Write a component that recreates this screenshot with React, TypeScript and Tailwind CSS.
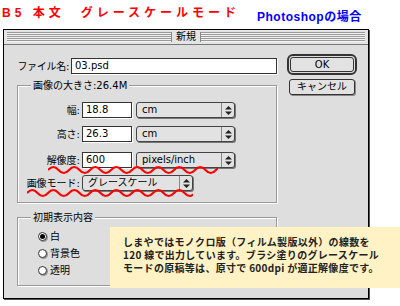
import React from 'react';

const font = "font-['DejaVu_Sans','Noto_Sans_CJK_JP',sans-serif]";

const Wave = ({ width, left, top }: { width: number; left: number; top: number }) => {
  const seg = 10.5;
  const n = Math.ceil(width / seg);
  let d = `M0 4 q${seg / 2} -6 ${seg} 0`;
  for (let i = 1; i < n; i++) d += ` t${seg} 0`;
  return (
    <svg
      width={width}
      height={8}
      className="absolute"
      style={{ left, top }}
    >
      <path d={d} fill="none" stroke="#ff0000" strokeWidth={2} />
    </svg>
  );
};

const Field = ({ value, className }: { value: string; className: string }) => (
  <div
    className={`h-[16px] bg-white border border-[#333] shadow-[1px_1px_0_#fff] pl-[3px] text-[10px] leading-[14px] text-black ${className}`}
  >
    {value}
  </div>
);

const Popup = ({ value, className }: { value: string; className: string }) => (
  <div
    className={`h-[16px] flex items-stretch border border-[#444] rounded-[3px] bg-[#e2e2e2] shadow-[1px_1px_0_#777] text-[10px] ${className}`}
  >
    <span className="flex-1 pl-[5px] leading-[14px]">{value}</span>
    <span className="w-[13px] border-l border-[#888] flex items-center justify-center">
      <svg width="7" height="9" viewBox="0 0 7 9">
        <path d="M3.5 0 L7 3.5 L0 3.5 Z M0 5.5 L7 5.5 L3.5 9 Z" fill="#222" />
      </svg>
    </span>
  </div>
);

const Radio = ({ label, checked }: { label: string; checked?: boolean }) => (
  <div className="flex items-center h-[17px]">
    <span className="w-[9px] h-[9px] rounded-full border border-[#333] bg-white shadow-[1px_1px_0_#999] flex items-center justify-center">
      {checked && <span className="w-[5px] h-[5px] rounded-full bg-black" />}
    </span>
    <span className="ml-[3px] text-[10px]">{label}</span>
  </div>
);

const Group = ({
  title,
  className,
  children,
}: {
  title: string;
  className: string;
  children: React.ReactNode;
}) => (
  <div
    className={`relative border border-[#999] shadow-[inset_1px_1px_0_#fff,1px_1px_0_#fff] ${className}`}
  >
    <span className="absolute -top-[7px] left-[13px] px-[2px] bg-[#dedede] text-[10px] leading-[13px] whitespace-nowrap">
      {title}
    </span>
    {children}
  </div>
);

const Label = ({ text }: { text: string }) => (
  <span className="w-[64px] pr-[2px] flex justify-end whitespace-nowrap text-[10px]">{text}</span>
);

const App: React.FC = () => {
  return (
    <div className={`relative w-[400px] h-[306px] bg-white overflow-hidden text-black ${font}`}>
      {/* heading */}
      <div className="h-[29px] flex items-start pl-[2px]">
        <span className="w-[255px] pt-[7px] text-[12px] leading-[12px] font-bold tracking-[4px] text-[#ff0000] font-['Liberation_Sans','Noto_Sans_CJK_JP',sans-serif] whitespace-nowrap">
          B5 本文　グレースケールモード
        </span>
        <span className="pt-[11px] text-[12px] leading-[12px] font-bold tracking-[0.5px] text-[#0000ff] font-['Liberation_Sans','Noto_Sans_CJK_JP',sans-serif] whitespace-nowrap">
          Photoshopの場合
        </span>
      </div>

      {/* dialog */}
      <div className="ml-[3px] w-[366px] h-[270px] border border-black shadow-[1px_1px_0_#555] bg-[#dedede] flex flex-col">
        <div className="h-[15px] px-[3px] flex items-center border-b border-[#777] bg-[#e4e4e4]">
          <div className="flex-1 h-[10px] bg-[repeating-linear-gradient(to_bottom,#9a9a9a_0px,#9a9a9a_1px,#f2f2f2_1px,#f2f2f2_2px)] border-r border-[#888]" />
          <span className="px-[4px] text-[10px] leading-[12px]">新規</span>
          <div className="flex-1 h-[10px] bg-[repeating-linear-gradient(to_bottom,#9a9a9a_0px,#9a9a9a_1px,#f2f2f2_1px,#f2f2f2_2px)] border-l border-[#888]" />
        </div>

        <div className="flex flex-1">
          {/* left column */}
          <div className="w-[273px] pl-[13px] pt-[13px]">
            <div className="flex items-center h-[16px]">
              <span className="w-[54px] pr-[2px] flex justify-end whitespace-nowrap text-[10px] tracking-[-0.3px]">
                ファイル名:
              </span>
              <Field value="03.psd" className="w-[206px]" />
            </div>

            <Group title="画像の大きさ:26.4M" className="mt-[11px] h-[118px] pt-[16px]">
              <div className="flex items-center h-[16px]">
                <Label text="幅:" />
                <Field value="18.8" className="w-[50px]" />
                <Popup value="cm" className="ml-[4px] w-[99px]" />
              </div>
              <div className="flex items-center h-[16px] mt-[8px]">
                <Label text="高さ:" />
                <Field value="26.3" className="w-[50px]" />
                <Popup value="cm" className="ml-[4px] w-[99px]" />
              </div>
              <div className="flex items-center h-[16px] mt-[10px]">
                <Label text="解像度:" />
                <Field value="600" className="w-[50px]" />
                <Popup value="pixels/inch" className="ml-[4px] w-[99px]" />
              </div>
              <div className="flex items-center h-[16px] mt-[7px]">
                <Label text="画像モード:" />
                <Popup value="グレースケール" className="w-[111px]" />
              </div>
            </Group>

            <Group title="初期表示内容" className="mt-[14px] h-[69px] pl-[20px] pt-[10px]">
              <Radio label="白" checked />
              <Radio label="背景色" />
              <Radio label="透明" />
            </Group>
          </div>

          {/* buttons */}
          <div className="pl-[10px] pt-[9px]">
            <div className="w-[70px] h-[21px] border-[2px] border-[#333] rounded-[6px] p-[1px]">
              <div className="h-full border border-[#333] rounded-[3px] bg-[#e2e2e2] flex items-center justify-center text-[10px] leading-none">
                OK
              </div>
            </div>
            <div className="ml-[2px] mt-[4px] w-[66px] h-[16px] border border-[#333] rounded-[3px] bg-[#e2e2e2] shadow-[1px_1px_0_#888] flex items-center justify-center text-[10px] leading-none">
              キャンセル
            </div>
          </div>
        </div>
      </div>

      <Wave width={170} left={48} top={166} />
      <Wave width={166} left={27} top={189} />

      {/* note */}
      <div className="absolute left-[110px] top-[227px] w-[290px] h-[61px] bg-[#fff2c4] pl-[13px] pt-[8px] text-[10px] leading-[13px] tracking-[0.3px] font-bold text-[#222] font-['Noto_Sans_CJK_JP',sans-serif] whitespace-nowrap">
        <div>しまやではモノクロ版（フィルム製版以外）の線数を</div>
        <div>120 線で出力しています。ブラシ塗りのグレースケール</div>
        <div>モードの原稿等は、原寸で 600dpi が適正解像度です。</div>
      </div>
    </div>
  );
};

export default App;
